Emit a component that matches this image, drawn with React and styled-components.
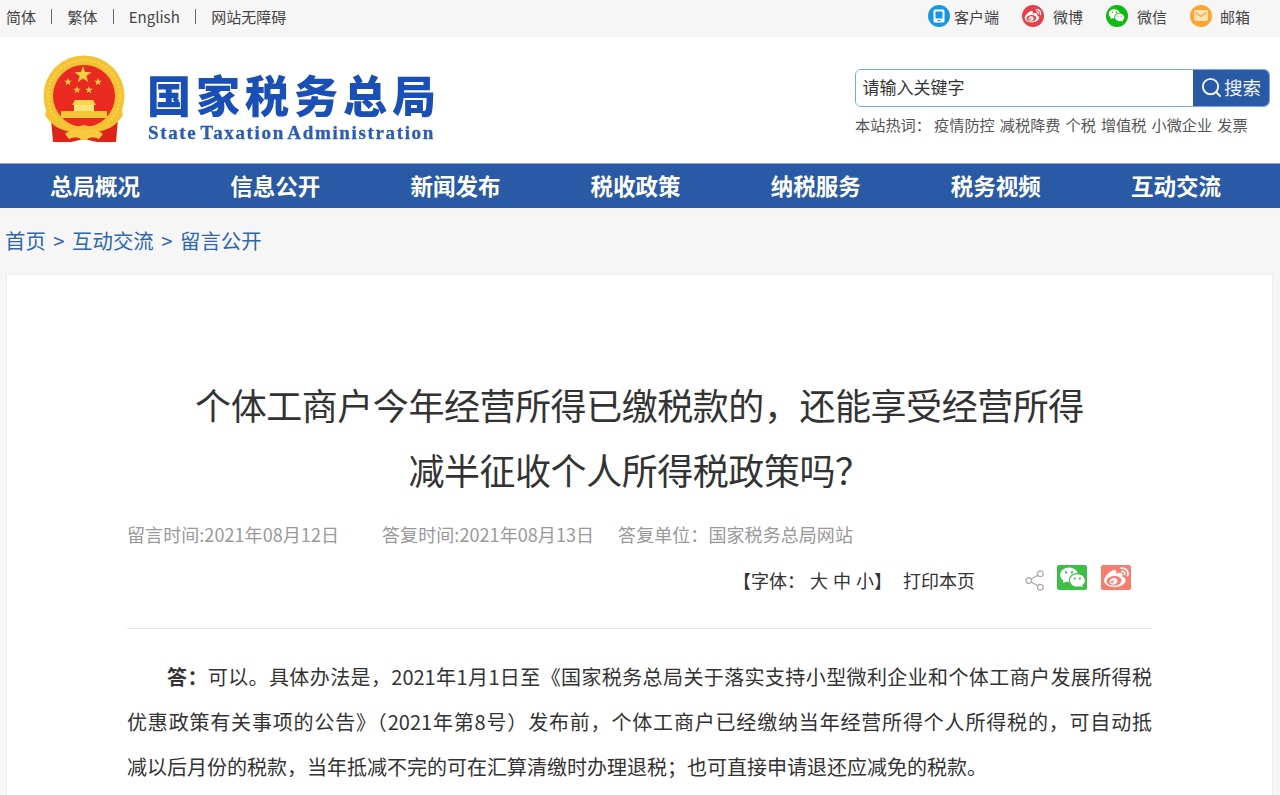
import React from "react";
import styled, { createGlobalStyle } from "styled-components";
import { RiWeiboFill, RiWechatFill } from "react-icons/ri";
import { Share2, Search } from "lucide-react";

const FONT = `"Noto Sans CJK SC", "Open Sans", "Liberation Sans", sans-serif`;

const Global = createGlobalStyle`
  html, body { margin: 0; padding: 0; background: #f6f6f6; overflow: hidden; }
  body { font-family: ${FONT}; color: #333; }
  #root { height: 795px; overflow: hidden; }
  * { box-sizing: border-box; }
`;

const TopBar = styled.div`
  height: 37px;
  background: #f6f6f6;
  display: flex;
  align-items: center;
  justify-content: space-between;
  padding: 0 30px 4px 6px;
  font-size: 15px;
  color: #444;
`;
const TopLeft = styled.div`
  display: flex;
  align-items: center;
  gap: 15.2px;
`;
const Sep = styled.span`
  width: 1px;
  height: 15px;
  background: #667;
`;
const TopRight = styled.div`
  display: flex;
  align-items: center;
  gap: 23px;
`;
const TopItem = styled.div`
  display: flex;
  align-items: center;
  gap: ${(p) => p.$gap}px;
`;
const Dot = styled.span`
  width: 22px;
  height: 22px;
  margin-bottom: 2px;
  border-radius: 50%;
  background: ${(p) => p.$bg};
  color: #fff;
  display: flex;
  align-items: center;
  justify-content: center;
`;

const Header = styled.header`
  height: 126px;
  background: #fff;
  display: flex;
  justify-content: space-between;
  padding: 18px 10px 0 43px;
`;
const Logo = styled.div`
  display: flex;
  gap: 21px;
  filter: blur(0.35px);
`;
const LogoText = styled.div`
  display: flex;
  flex-direction: column;
  padding-top: 10px;
`;
const LogoCn = styled.div`
  font-size: 44px;
  line-height: 58px;
  font-weight: 900;
  letter-spacing: 5px;
  color: #1a50b5;
  margin-left: -1px;
`;
const LogoEn = styled.div`
  font-family: "Liberation Serif", serif;
  font-weight: 700;
  font-size: 19px;
  line-height: 20px;
  letter-spacing: 1.65px;
  word-spacing: -2.9px;
  color: #2a5cb8;
  -webkit-text-stroke: 0.3px #2a5cb8;
  white-space: nowrap;
`;
const SearchArea = styled.div`
  width: 415px;
  padding-top: 13.5px;
`;
const SearchBox = styled.div`
  display: flex;
  height: 38px;
  border: 1px solid #74a9e0;
  border-radius: 6px;
  overflow: hidden;
`;
const SearchInput = styled.div`
  flex: 1;
  font-size: 17px;
  line-height: 33px;
  padding-left: 6.5px;
  color: #333;
  background: #fff;
`;
const SearchButton = styled.div`
  width: 76px;
  background: #2a5aa5;
  color: #f2f5fa;
  font-size: 18.5px;
  display: flex;
  align-items: center;
  justify-content: center;
  gap: 1px;
  padding-right: 1px;
  padding-bottom: 1px;
`;
const Hot = styled.div`
  display: flex;
  font-size: 15.2px;
  line-height: 20px;
  margin-top: 7.5px;
  color: #555;
  gap: 5px;
  white-space: nowrap;
`;
const HotLabel = styled.span`
  width: 74px;
`;

const Nav = styled.nav`
  height: 45px;
  background: #2a5aa5;
  border-top: 1px solid #8fa9cf;
  display: grid;
  grid-template-columns: repeat(7, 180.17px);
  padding-left: 5px;
`;
const NavItem = styled.div`
  color: #fff;
  font-size: 22.5px;
  font-weight: 700;
  line-height: 42px;
  text-align: center;
  white-space: nowrap;
`;

const Crumbs = styled.div`
  height: 65px;
  padding: 11px 0 0 5px;
  font-size: 20.4px;
  line-height: 42px;
  color: #2e66b0;
  display: flex;
  gap: 7.5px;
`;

const Card = styled.main`
  margin: 1px 7px 0 6px;
  background: #fff;
  border: 1px solid #eeeeee;
  padding: 97px 120px 0;
  height: 600px;
`;
const Title = styled.h1`
  margin: 0;
  font-size: 36px;
  font-weight: 400;
  letter-spacing: -0.45px;
  line-height: 65px;
  text-align: center;
  color: #333;
`;
const Meta = styled.div`
  display: flex;
  font-size: 18px;
  line-height: 28px;
  letter-spacing: 0.07px;
  color: #999;
  margin-top: 18px;
  white-space: nowrap;
`;
const MetaItem = styled.span`
  margin-right: ${(p) => p.$mr}px;
`;
const Tools = styled.div`
  display: flex;
  align-items: center;
  justify-content: flex-end;
  height: 34px;
  margin-top: 15px;
  padding-right: 21px;
  font-size: 18px;
  color: #333;
  white-space: nowrap;
`;
const ToolText = styled.span`
  margin-right: ${(p) => p.$mr}px;
  word-spacing: ${(p) => p.$ws || 0}px;
`;
const ShareIcon = styled(Share2)`
  color: #aaa;
  margin-right: 11px;
  margin-top: 0;
`;
const ShareBtn = styled.span`
  width: 30px;
  height: 25px;
  margin-left: ${(p) => p.$ml}px;
  margin-top: -5px;
  border-radius: 2px;
  background: ${(p) => p.$bg};
  color: #fff;
  display: flex;
  align-items: center;
  justify-content: center;
`;
const Rule = styled.hr`
  border: 0;
  height: 1px;
  background: #e6e5e2;
  margin: 31px 0 25px;
`;
const Paragraph = styled.div`
  font-size: 20px;
  line-height: 45px;
  color: #333;
`;
const Line = styled.p`
  margin: 0;
  white-space: nowrap;
  text-indent: ${(p) => (p.$indent ? "40px" : "0")};
  text-align: justify;
  text-align-last: ${(p) => (p.$last ? "left" : "justify")};
`;

const star = (cx, cy, r) => {
  const pts = [];
  for (let i = 0; i < 10; i++) {
    const a = -Math.PI / 2 + (i * Math.PI) / 5;
    const d = i % 2 ? r * 0.4 : r;
    pts.push(`${(cx + d * Math.cos(a)).toFixed(2)},${(cy + d * Math.sin(a)).toFixed(2)}`);
  }
  return pts.join(" ");
};

const Emblem = () => (
  <svg width="84" height="89" viewBox="0 0 84 89">
    <circle cx="41" cy="41" r="40.5" fill="#f4c233" />
    <circle cx="41" cy="41" r="36" fill="none" stroke="#fbd75b" strokeWidth="2" strokeDasharray="2 2" />
    <circle cx="41" cy="41" r="31" fill="#e92a20" />
    <polygon points={star(40, 20, 9)} fill="#f7cf45" />
    <polygon points={star(25, 27, 4)} fill="#f7cf45" />
    <polygon points={star(55, 27, 4)} fill="#f7cf45" />
    <polygon points={star(34, 35, 4)} fill="#f7cf45" />
    <polygon points={star(46, 35, 4)} fill="#f7cf45" />
    <path d="M32 45h18l3 5H29z" fill="#f9d44e" />
    <rect x="31" y="50" width="20" height="6" fill="#fbe27a" />
    <rect x="18" y="56" width="46" height="7" fill="#f6c63a" />
    <path d="M8 64C16 76 28 80 41 72C54 80 66 76 75 64L73 87H54L41 84L28 87H10Z" fill="#dd2418" />
    <path d="M4 52C12 70 30 74 41 70C52 74 70 70 78 52L80 60C70 77 52 79 41 74C30 79 12 77 2 60Z" fill="#f4c233" />
    <path d="M22 79C30 72 36 76 41 73C46 76 52 72 60 79L56 84C50 82 46 82 44 85H38C36 82 32 82 26 84Z" fill="#f6c93f" />
  </svg>
);

const DeviceIcon = () => (
  <svg width="12" height="14" viewBox="0 0 12 14">
    <rect x="0.5" y="0.5" width="11" height="13" rx="1.5" fill="#fff" />
    <rect x="2.5" y="2.5" width="7" height="7" fill="#1b96e0" />
    <rect x="4.5" y="11" width="3" height="1" fill="#1b96e0" />
  </svg>
);

const MailIcon = () => (
  <svg width="14" height="11" viewBox="0 0 14 11">
    <rect width="14" height="11" rx="2" fill="#fde3b8" />
    <path d="M1.5 2.5 7 6.5l5.5-4" fill="none" stroke="#ffa42e" strokeWidth="1.4" />
  </svg>
);

const navItems = ["总局概况", "信息公开", "新闻发布", "税收政策", "纳税服务", "税务视频", "互动交流"];

export default function App() {
  return (
    <>
      <Global />
      <TopBar>
        <TopLeft>
          <span>简体</span>
          <Sep />
          <span>繁体</span>
          <Sep />
          <span>English</span>
          <Sep />
          <span>网站无障碍</span>
        </TopLeft>
        <TopRight>
          <TopItem $gap={4}>
            <Dot $bg="#1b96e0"><DeviceIcon /></Dot>
            <span>客户端</span>
          </TopItem>
          <TopItem $gap={9}>
            <Dot $bg="#e8404a"><RiWeiboFill size={18} /></Dot>
            <span>微博</span>
          </TopItem>
          <TopItem $gap={9}>
            <Dot $bg="#0fbb0f"><RiWechatFill size={17} /></Dot>
            <span>微信</span>
          </TopItem>
          <TopItem $gap={8}>
            <Dot $bg="#ffa42e"><MailIcon /></Dot>
            <span>邮箱</span>
          </TopItem>
        </TopRight>
      </TopBar>
      <Header>
        <Logo>
          <Emblem />
          <LogoText>
            <LogoCn>国家税务总局</LogoCn>
            <LogoEn>State Taxation Administration</LogoEn>
          </LogoText>
        </Logo>
        <SearchArea>
          <SearchBox>
            <SearchInput>请输入关键字</SearchInput>
            <SearchButton>
              <Search size={23} strokeWidth={2} />
              <span>搜索</span>
            </SearchButton>
          </SearchBox>
          <Hot>
            <HotLabel>本站热词：</HotLabel>
            <span>疫情防控</span>
            <span>减税降费</span>
            <span>个税</span>
            <span>增值税</span>
            <span>小微企业</span>
            <span>发票</span>
          </Hot>
        </SearchArea>
      </Header>
      <Nav>
        {navItems.map((n) => (
          <NavItem key={n}>{n}</NavItem>
        ))}
      </Nav>
      <Crumbs>
        <span>首页</span>
        <span>&gt;</span>
        <span>互动交流</span>
        <span>&gt;</span>
        <span>留言公开</span>
      </Crumbs>
      <Card>
        <Title>
          个体工商户今年经营所得已缴税款的，还能享受经营所得
          <br />
          减半征收个人所得税政策吗？
        </Title>
        <Meta>
          <MetaItem $mr={43}>留言时间:2021年08月12日</MetaItem>
          <MetaItem $mr={24}>答复时间:2021年08月13日</MetaItem>
          <MetaItem $mr={0}>答复单位：国家税务总局网站</MetaItem>
        </Meta>
        <Tools>
          <ToolText $mr={11} $ws={1}>【字体： 大 中 小】</ToolText>
          <ToolText $mr={48}>打印本页</ToolText>
          <ShareIcon size={23} strokeWidth={1.3} />
          <ShareBtn $bg="#3dbe45" $ml={0}><RiWechatFill size={27} /></ShareBtn>
          <ShareBtn $bg="#f87d6e" $ml={14}><RiWeiboFill size={27} /></ShareBtn>
        </Tools>
        <Rule />
        <Paragraph>
          <Line $indent><strong>答：</strong>可以。具体办法是，2021年1月1日至《国家税务总局关于落实支持小型微利企业和个体工商户发展所得税</Line>
          <Line>优惠政策有关事项的公告》（2021年第8号）发布前，个体工商户已经缴纳当年经营所得个人所得税的，可自动抵</Line>
          <Line $last>减以后月份的税款，当年抵减不完的可在汇算清缴时办理退税；也可直接申请退还应减免的税款。</Line>
        </Paragraph>
      </Card>
    </>
  );
}
